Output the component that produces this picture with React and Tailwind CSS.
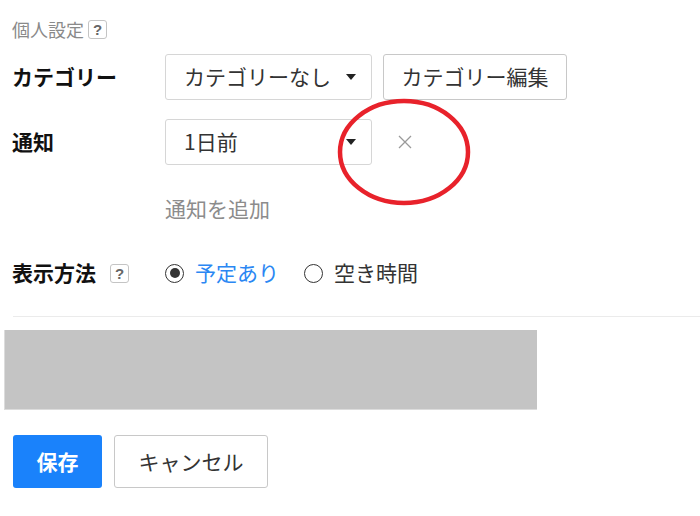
import { useState } from 'react';

function Help() {
  return (
    <span className="inline-flex items-center justify-center w-[19px] h-[19px] border border-[#c4c4c4] rounded-[3px] text-[15px] font-bold text-[#666] leading-none font-['Liberation_Sans',sans-serif]">
      ?
    </span>
  );
}

function Caret() {
  return (
    <svg width="10" height="6" viewBox="0 0 10 6" className="shrink-0">
      <path d="M0 0h10L5 6z" fill="#222" />
    </svg>
  );
}

function SelectBox({ value }) {
  return (
    <div className="flex items-center justify-between w-[207px] h-[46px] pl-[18px] pr-[15px] border border-[#d6d6d6] rounded-[3px] bg-white text-[21px] text-[#333]">
      <span>{value}</span>
      <Caret />
    </div>
  );
}

function Radio({ checked, label, onClick }) {
  return (
    <label className="flex items-center gap-[11px] cursor-pointer" onClick={onClick}>
      <span className="flex items-center justify-center w-[19px] h-[19px] rounded-full border-[1.5px] border-[#333]">
        {checked && <span className="w-[10px] h-[10px] rounded-full bg-[#333]" />}
      </span>
      <span className={checked ? 'text-[#2b87f3]' : 'text-[#333]'}>{label}</span>
    </label>
  );
}

export default function App() {
  const [mode, setMode] = useState('busy');

  return (
    <div
      className="relative w-[700px] h-[516px] bg-white overflow-hidden"
      style={{ fontFamily: '"Noto Sans CJK JP", "Noto Sans", sans-serif' }}
    >
      {/* 個人設定 */}
      <div className="flex items-center gap-[4px] pl-[12px] pt-[19px] text-[18px] text-[#8a8a8a] leading-[20px]">
        <span>個人設定</span>
        <Help />
      </div>

      {/* カテゴリー */}
      <div className="flex items-center pl-[12px] mt-[15px]">
        <div className="w-[153px] text-[21px] font-bold text-[#111]">カテゴリー</div>
        <SelectBox value="カテゴリーなし" />
        <button className="ml-[11px] w-[184px] h-[46px] border border-[#c8c8c8] rounded-[3px] text-[21px] text-[#333] bg-white">
          カテゴリー編集
        </button>
      </div>

      {/* 通知 */}
      <div className="flex items-center pl-[12px] mt-[19px]">
        <div className="w-[153px] text-[21px] font-bold text-[#111]">通知</div>
        <SelectBox value="1日前" />
        <button className="ml-[26px] text-[#999]">
          <svg width="14" height="14" viewBox="0 0 14 14">
            <path d="M1 1l12 12M13 1L1 13" stroke="#9a9a9a" strokeWidth="1.3" />
          </svg>
        </button>
      </div>
      <div className="pl-[165px] mt-[28px] text-[21px] text-[#8c8c8c] leading-[30px]">通知を追加</div>

      {/* 表示方法 */}
      <div className="flex items-center pl-[12px] mt-[35px] h-[30px]">
        <div className="w-[153px] flex items-center gap-[14px]">
          <span className="text-[21px] font-bold text-[#111]">表示方法</span>
          <Help />
        </div>
        <div className="flex items-center gap-[25px] text-[21px]">
          <Radio checked={mode === 'busy'} label="予定あり" onClick={() => setMode('busy')} />
          <Radio checked={mode === 'free'} label="空き時間" onClick={() => setMode('free')} />
        </div>
      </div>

      <div className="ml-[13px] mt-[28px] h-px bg-[#ebebeb]" />

      {/* placeholder area */}
      <div className="ml-[4px] mt-[13px] w-[533px] h-[80px] bg-[#c4c4c4] border-l border-b border-[#dcdcdc]" />

      {/* buttons */}
      <div className="flex items-center gap-[12px] pl-[13px] mt-[25px]">
        <button className="w-[89px] h-[53px] rounded-[3px] bg-[#1a82fb] text-white text-[21px] font-bold">
          保存
        </button>
        <button className="w-[154px] h-[53px] rounded-[3px] border border-[#c8c8c8] bg-white text-[21px] text-[#333]">
          キャンセル
        </button>
      </div>

      {/* red annotation ring */}
      <svg className="absolute left-[336px] top-[97px] pointer-events-none" width="136" height="110" viewBox="0 0 136 110">
        <ellipse cx="68" cy="55" rx="64" ry="51" fill="none" stroke="#e8222b" strokeWidth="4.5" />
      </svg>
    </div>
  );
}
